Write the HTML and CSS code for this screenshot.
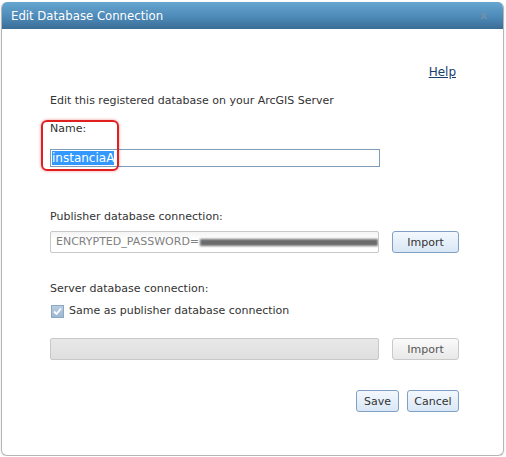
FILE: index.html
```html
<!DOCTYPE html>
<html>

<head>
    <meta charset="utf-8">
    <title>Edit Database Connection</title>
    <link rel="stylesheet" href="styles.css">
</head>

<body>
    <div class="dialog">
        <div class="titlebar">
            <span class="title">Edit Database Connection</span>
            <span class="close">x</span>
        </div>

        <div class="content">
            <div class="help-row"><a href="#" class="help">Help</a></div>

            <p class="intro">Edit this registered database on your ArcGIS Server</p>

            <!-- Name -->
            <div class="name-field">
                <div class="label">Name:</div>
                <div class="textbox"><span class="selected">instanciaA</span></div>
                <div class="callout"></div>
            </div>

            <!-- Publisher connection -->
            <div class="label publisher-label">Publisher database connection:</div>
            <div class="field-row">
                <div class="connbox">ENCRYPTED_PASSWORD=<span class="masked"></span></div>
                <button class="button">Import</button>
            </div>

            <!-- Server connection -->
            <div class="label server-label">Server database connection:</div>
            <div class="check-row">
                <span class="checkbox">
                    <svg width="9" height="9" viewBox="0 0 9 9">
                        <path d="M1 4.5 L3.5 7 L8 1.5" fill="none" stroke="#fff" stroke-width="1.8" />
                    </svg>
                </span>
                <span>Same as publisher database connection</span>
            </div>
            <div class="field-row server-row">
                <div class="connbox empty"></div>
                <button class="button disabled">Import</button>
            </div>

            <div class="actions">
                <button class="button save">Save</button>
                <button class="button cancel">Cancel</button>
            </div>
        </div>
    </div>
</body>

</html>
```

FILE: styles.css
```css
/* Page and dialog frame */
body {
    margin: 0;
    background-color: #fff;
    font-family: "DejaVu Sans", Verdana, sans-serif;
    font-size: 11px;
    color: #333;
}

.dialog {
    width: 501px;
    margin: 2px 0 0 1px;
    border: 1px solid #b5b5b5;
    border-top: none;
    border-radius: 6px;
    overflow: hidden;
    box-shadow: 0 1px 2px rgba(0, 0, 0, 0.15);
}

.titlebar {
    height: 27px;
    display: flex;
    align-items: center;
    justify-content: space-between;
    padding: 0 16px 0 9px;
    background: linear-gradient(#67a6d1, #4b87b5 60%, #3a6d96);
    color: #fff;
}

.title {
    font-family: "DejaVu Sans Condensed", "DejaVu Sans", sans-serif;
    font-size: 13px;
}

.close {
    font-size: 11px;
    font-weight: bold;
    color: #6f90ad;
}

.content {
    padding: 36px 44px 43px 48px;
    line-height: 14px;
}

.help-row {
    text-align: right;
    padding-right: 3px;
}

.help {
    color: #1b3d6d;
    font-size: 12px;
}

.intro {
    margin: 14px 0 0 0;
}

/* Name field with its red marker */
.name-field {
    position: relative;
    margin-top: 14px;
}

.textbox {
    width: 327px;
    height: 16px;
    margin-top: 13px;
    border: 1px solid #7f9db9;
    font-size: 12px;
    line-height: 16px;
    padding-left: 1px;
}

.selected {
    background-color: #3399ff;
    color: #fff;
}

.callout {
    position: absolute;
    left: -9px;
    top: -2px;
    width: 74px;
    height: 47px;
    border: 2px solid #e02020;
    border-radius: 6px;
    box-shadow: 0 0 3px rgba(224, 32, 32, 0.5);
}

.publisher-label {
    margin-top: 43px;
}

.server-label {
    margin-top: 29px;
}

/* Connection string rows */
.field-row {
    display: flex;
    gap: 13px;
    margin-top: 7px;
}

.server-row {
    margin-top: 20px;
}

.connbox {
    flex: 0 0 auto;
    width: 322px;
    height: 20px;
    padding-left: 5px;
    border: 1px solid #c8c8c8;
    border-radius: 2px;
    background: linear-gradient(#f4f4f4, #fff 40%);
    color: #808080;
    line-height: 20px;
    display: flex;
    align-items: center;
    overflow: hidden;
}

.connbox.empty {
    background: linear-gradient(#e8e8e8, #dedede);
}

.masked {
    flex: 1;
    height: 7px;
    margin-left: 1px;
    background-color: #6b6b6b;
    filter: blur(0.8px);
}

.button {
    height: 22px;
    padding: 0;
    border: 1px solid #7f9fc4;
    border-radius: 3px;
    background: linear-gradient(#f3f8fd, #d9e7f6);
    font-family: "DejaVu Sans", Verdana, sans-serif;
    font-size: 11px;
    color: #333;
}

.field-row .button {
    flex: 0 0 auto;
    width: 67px;
}

.button.disabled {
    border-color: #c9c9c9;
    background: linear-gradient(#fafafa, #e8e8e8);
    color: #555;
}

.button.save {
    width: 43px;
}

.button.cancel {
    width: 52px;
}

/* Checkbox row */
.check-row {
    display: flex;
    align-items: center;
    gap: 5px;
    margin-top: 8px;
    padding-left: 1px;
}

.checkbox {
    width: 11px;
    height: 11px;
    border: 1px solid #8ea8c4;
    background: linear-gradient(#b9cde2, #9db7d3);
    display: flex;
    align-items: center;
    justify-content: center;
}

.actions {
    display: flex;
    justify-content: flex-end;
    gap: 8px;
    margin-top: 30px;
}
```
